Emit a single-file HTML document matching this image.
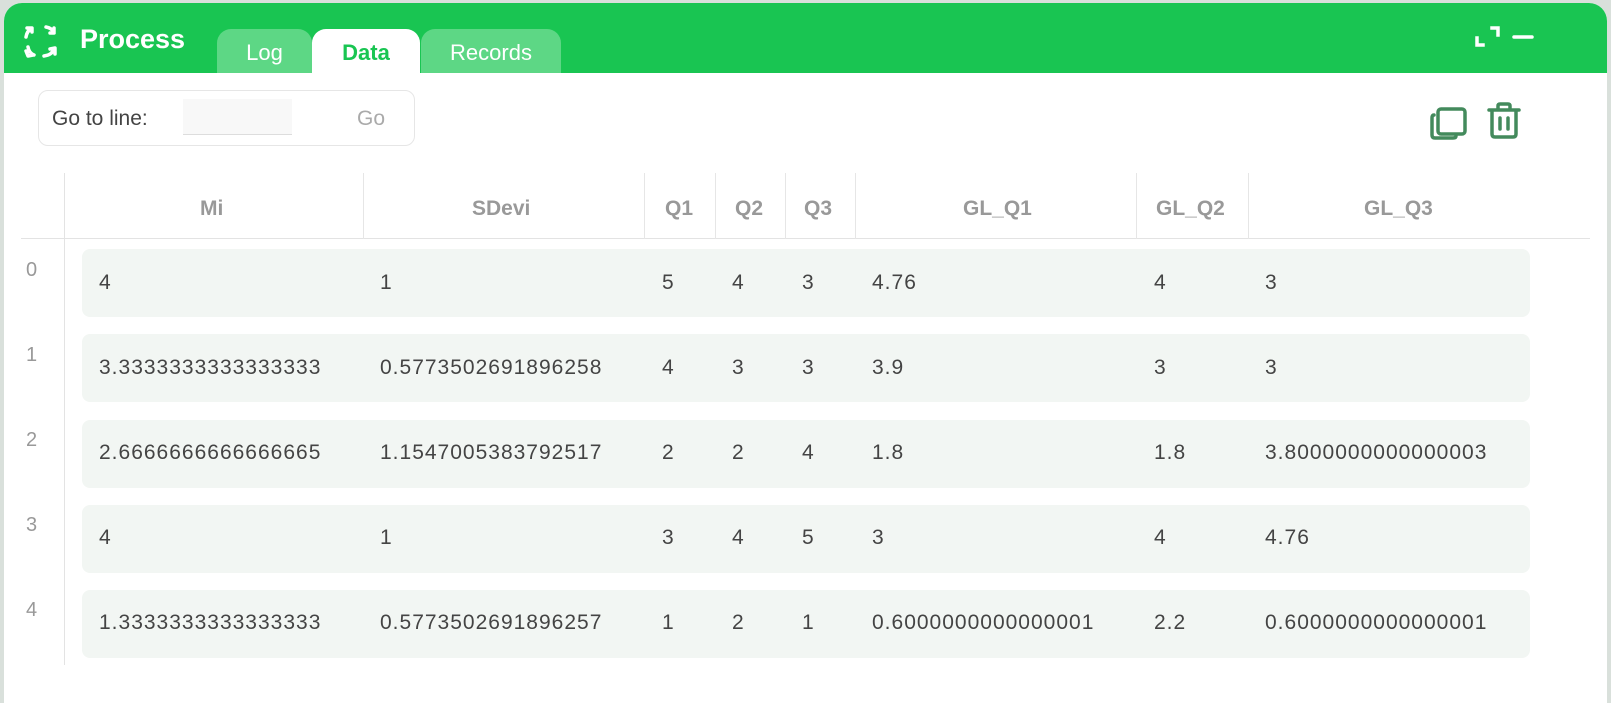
<!DOCTYPE html>
<html><head><style>
*{margin:0;padding:0;box-sizing:border-box}
body{width:1611px;height:694px;background:#d9e0db;position:relative;overflow:hidden;font-family:"Liberation Sans",sans-serif}
.panel{position:absolute;left:4px;top:3px;width:1603px;height:700px;background:#fff;border-radius:18px 18px 0 0;overflow:hidden}
.hdr{position:absolute;left:0;top:0;width:100%;height:70px;background:#19c552}
.title{position:absolute;left:76px;top:21px;color:#fff;font-weight:bold;font-size:27px}
.tab{position:absolute;top:26px;height:44px;border-radius:14px 14px 0 0;background:#5dd785;color:#fff;font-size:22px;text-align:center;line-height:48px}
.abs{position:absolute}
.t{position:absolute;font-size:21px;color:#444;letter-spacing:1px}
.h{position:absolute;font-size:21px;color:#999;font-weight:bold;top:197px}
.row{position:absolute;left:82px;width:1448px;height:68px;background:#f2f6f3;border-radius:8px}
.n{position:absolute;left:26px;font-size:20px;color:#999}
.vl{position:absolute;top:173px;width:1px;height:66px;background:#e6e6e6}
</style></head><body>
<div class="panel">
<div class="hdr">
<svg class="abs" style="left:18px;top:20px" width="38" height="38" viewBox="0 0 38 38" fill="none" stroke="#fff" stroke-width="3.5" stroke-linecap="round" stroke-linejoin="round">
<path d="M4 14 Q5 8 9 6 M5 5 L10 5 L10 9"/><path d="M24 4 Q30 5 32 10 M32 5 L32 10 L28 10"/>
<path d="M6 24 Q7 30 12 32 M4 28 L6 33 L11 32"/><path d="M22 33 Q30 32 32 26 M33 31 L33 25 L28 26"/>
</svg>
<div class="title">Process</div>
<div class="tab" style="left:213px;width:95px">Log</div>
<div class="tab" style="left:308px;width:108px;background:#fff;color:#19c552;font-weight:bold">Data</div>
<div class="tab" style="left:417px;width:140px">Records</div>
<svg class="abs" style="left:1470px;top:22px" width="60" height="30" fill="none" stroke="#fff" stroke-width="3.5" stroke-linecap="square">
<path d="M3 13 V20 H9 M18 3 H24 V10"/><path d="M40 12 H58" stroke-linecap="round"/>
</svg>
</div>
<div class="abs" style="left:34px;top:87px;width:377px;height:56px;border:1px solid #e6e6e6;border-radius:10px"></div>
<div class="abs" style="left:48px;top:104px;font-size:21px;color:#444">Go to line:</div>
<div class="abs" style="left:179px;top:96px;width:109px;height:36px;background:#f8f8f8;border-bottom:1px solid #ddd"></div>
<div class="abs" style="left:353px;top:104px;font-size:21px;color:#aaa">Go</div>
<svg class="abs" style="left:1424px;top:98px" width="100" height="40" fill="none" stroke="#438a5c" stroke-width="3.5" stroke-linejoin="round" stroke-linecap="round">
<rect x="10" y="8" width="27" height="25" rx="3"/><path d="M6 14 Q4 14 4 17 V34 Q4 37 7 37 H25 Q28 37 28 35"/>
<path d="M61 9 H91 M70 9 V5 Q70 3 72 3 H80 Q82 3 82 5 V9"/><path d="M64 10 V33 Q64 36 67 36 H85 Q88 36 88 33 V10"/><path d="M72 17 V28 M80 17 V28"/>
</svg>
<div class="abs" style="left:60px;top:170px;width:1px;height:492px;background:#e3e3e3"></div>
<div class="abs" style="left:17px;top:235px;width:1569px;height:1px;background:#e3e3e3"></div>
</div>
<div class="vl" style="left:363px"></div><div class="vl" style="left:644px"></div><div class="vl" style="left:715px"></div><div class="vl" style="left:785px"></div><div class="vl" style="left:855px"></div><div class="vl" style="left:1136px"></div><div class="vl" style="left:1248px"></div>
<div class="h" style="left:200px">Mi</div>
<div class="h" style="left:472px">SDevi</div>
<div class="h" style="left:665px">Q1</div>
<div class="h" style="left:735px">Q2</div>
<div class="h" style="left:804px">Q3</div>
<div class="h" style="left:963px">GL_Q1</div>
<div class="h" style="left:1156px">GL_Q2</div>
<div class="h" style="left:1364px">GL_Q3</div>

<div class="row" style="top:249px"></div><div class="row" style="top:334px"></div><div class="row" style="top:420px"></div><div class="row" style="top:505px"></div><div class="row" style="top:590px"></div>
<div class="n" style="top:259px">0</div><div class="n" style="top:344px">1</div><div class="n" style="top:429px">2</div><div class="n" style="top:514px">3</div><div class="n" style="top:599px">4</div>

<div class="t" style="top:271px;left:99px">4</div><div class="t" style="top:271px;left:380px">1</div><div class="t" style="top:271px;left:662px">5</div><div class="t" style="top:271px;left:732px">4</div><div class="t" style="top:271px;left:802px">3</div><div class="t" style="top:271px;left:872px">4.76</div><div class="t" style="top:271px;left:1154px">4</div><div class="t" style="top:271px;left:1265px">3</div>
<div class="t" style="top:356px;left:99px">3.3333333333333333</div><div class="t" style="top:356px;left:380px">0.5773502691896258</div><div class="t" style="top:356px;left:662px">4</div><div class="t" style="top:356px;left:732px">3</div><div class="t" style="top:356px;left:802px">3</div><div class="t" style="top:356px;left:872px">3.9</div><div class="t" style="top:356px;left:1154px">3</div><div class="t" style="top:356px;left:1265px">3</div>
<div class="t" style="top:441px;left:99px">2.6666666666666665</div><div class="t" style="top:441px;left:380px">1.1547005383792517</div><div class="t" style="top:441px;left:662px">2</div><div class="t" style="top:441px;left:732px">2</div><div class="t" style="top:441px;left:802px">4</div><div class="t" style="top:441px;left:872px">1.8</div><div class="t" style="top:441px;left:1154px">1.8</div><div class="t" style="top:441px;left:1265px">3.8000000000000003</div>
<div class="t" style="top:526px;left:99px">4</div><div class="t" style="top:526px;left:380px">1</div><div class="t" style="top:526px;left:662px">3</div><div class="t" style="top:526px;left:732px">4</div><div class="t" style="top:526px;left:802px">5</div><div class="t" style="top:526px;left:872px">3</div><div class="t" style="top:526px;left:1154px">4</div><div class="t" style="top:526px;left:1265px">4.76</div>
<div class="t" style="top:611px;left:99px">1.3333333333333333</div><div class="t" style="top:611px;left:380px">0.5773502691896257</div><div class="t" style="top:611px;left:662px">1</div><div class="t" style="top:611px;left:732px">2</div><div class="t" style="top:611px;left:802px">1</div><div class="t" style="top:611px;left:872px">0.6000000000000001</div><div class="t" style="top:611px;left:1154px">2.2</div><div class="t" style="top:611px;left:1265px">0.6000000000000001</div>
</body></html>
